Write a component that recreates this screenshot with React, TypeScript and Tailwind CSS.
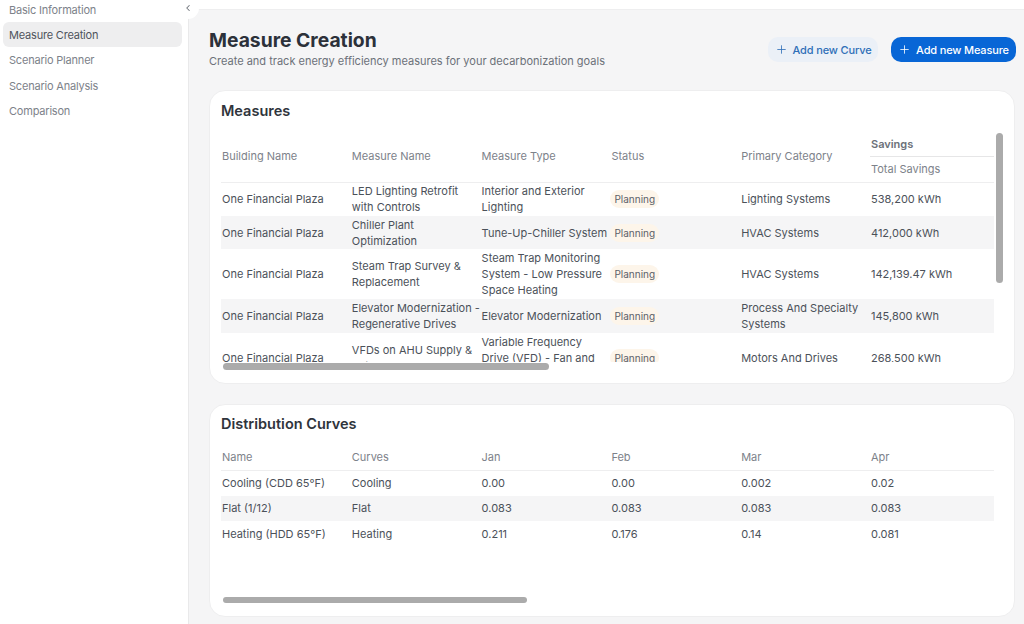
import { ChevronLeft, Plus } from 'lucide-react';

const navItems = ['Basic Information', 'Measure Creation', 'Scenario Planner', 'Scenario Analysis', 'Comparison'];

const measures = [
  { name: ['LED Lighting Retrofit', 'with Controls'], type: ['Interior and Exterior', 'Lighting'], category: ['Lighting Systems'], savings: '538,200 kWh', height: 'h-[34px]' },
  { name: ['Chiller Plant', 'Optimization'], type: ['Tune-Up-Chiller System'], category: ['HVAC Systems'], savings: '412,000 kWh', height: 'h-[33px]' },
  { name: ['Steam Trap Survey &', 'Replacement'], type: ['Steam Trap Monitoring', 'System - Low Pressure', 'Space Heating'], category: ['HVAC Systems'], savings: '142,139.47 kWh', height: 'h-[50px]' },
  { name: ['Elevator Modernization -', 'Regenerative Drives'], type: ['Elevator Modernization'], category: ['Process And Specialty', 'Systems'], savings: '145,800 kWh', height: 'h-[34px]' },
  { name: ['VFDs on AHU Supply &', 'Return Fans'], type: ['Variable Frequency', 'Drive (VFD) - Fan and', 'Pump Applications'], category: ['Motors And Drives'], savings: '268,500 kWh', height: 'h-[50px]' },
];

const curves = [
  ['Cooling (CDD 65°F)', 'Cooling', '0.00', '0.00', '0.002', '0.02'],
  ['Flat (1/12)', 'Flat', '0.083', '0.083', '0.083', '0.083'],
  ['Heating (HDD 65°F)', 'Heating', '0.211', '0.176', '0.14', '0.081'],
];

function Lines({ lines }: { lines: string[] }) {
  return (
    <div className="whitespace-nowrap">
      {lines.map(line => (
        <div key={line}>{line}</div>
      ))}
    </div>
  );
}

function Cols() {
  return (
    <colgroup>
      <col className="w-[129.8px]" />
      <col className="w-[129.8px]" />
      <col className="w-[129.8px]" />
      <col className="w-[129.8px]" />
      <col className="w-[129.8px]" />
      <col className="w-[124px]" />
    </colgroup>
  );
}

export default function App() {
  return (
    <div className="flex h-[624px] w-[1024px] overflow-hidden bg-[#f5f5f6] font-['Inter',sans-serif] text-[11px] leading-4 text-[#4b5159]">
      {/* Sidebar */}
      <aside className="relative w-[189px] shrink-0 border-r border-[#e9e9ea] bg-white px-[3px]">
        <div className="-mt-[3px] flex flex-col gap-[0.4px] tracking-[-0.2px]">
          {navItems.map(item => (
            <div
              key={item}
              className={
                item === 'Measure Creation'
                  ? 'flex h-[25px] w-[179px] items-center rounded-md bg-[#eeeeef] px-[6px] text-[#4f545c]'
                  : 'flex h-[25px] w-[179px] items-center px-[6px] text-[#7d828a]'
              }
            >
              {item}
            </div>
          ))}
        </div>
        <div className="absolute -right-[11px] -top-[3px] flex h-[22px] w-[22px] items-center justify-center rounded-full bg-white">
          <ChevronLeft size={10} strokeWidth={2.5} className="text-[#6f747b]" />
        </div>
      </aside>

      <div className="flex min-w-0 flex-1 flex-col">
        <div className="h-[10px] shrink-0 border-b border-[#eeeeef] bg-white" />

        <main className="flex flex-col pl-[20px] pr-[8px] pt-[18px]">
          {/* Header */}
          <div className="flex items-start justify-between">
            <div>
              <h1 className="text-[19.3px] font-bold leading-[24px] text-[#2c313a]">Measure Creation</h1>
              <p className="mt-px text-[#6c7179]">
                Create and track energy efficiency measures for your decarbonization goals
              </p>
            </div>
            <div className="mt-[9px] flex gap-[13px]">
              <button className="flex h-[25px] w-[110px] items-center justify-center gap-[5px] rounded-[10px] bg-[#ebf0f7] font-medium tracking-[-0.15px] text-[#2f6fb8]">
                <Plus size={13} strokeWidth={1.5} />
                Add new Curve
              </button>
              <button className="flex h-[25px] w-[125px] items-center justify-center gap-[5px] rounded-[10px] bg-[#0866d6] font-medium tracking-[-0.15px] text-white">
                <Plus size={13} strokeWidth={1.5} />
                Add new Measure
              </button>
            </div>
          </div>

          {/* Measures */}
          <section className="relative mt-[21px] h-[294px] w-[806px] overflow-hidden rounded-2xl border border-[#eeeeef] bg-white pl-[11px] pt-[10px]">
            <h2 className="text-[14.5px] font-semibold leading-[20px] text-[#2f343c]">Measures</h2>
            <div className="mt-[11px] h-[230px] w-[773px] overflow-hidden">
              <table className="w-[773px] table-fixed border-collapse">
                <Cols />
                <thead className="text-[#7d828a]">
                  <tr className="h-[24px]">
                    <th rowSpan={2} className="border-b border-[#eeeeef] pb-[2px] pl-px text-left font-normal">Building Name</th>
                    <th rowSpan={2} className="border-b border-[#eeeeef] pb-[2px] pl-px text-left font-normal">Measure Name</th>
                    <th rowSpan={2} className="border-b border-[#eeeeef] pb-[2px] pl-px text-left font-normal">Measure Type</th>
                    <th rowSpan={2} className="border-b border-[#eeeeef] pb-[2px] pl-px text-left font-normal">Status</th>
                    <th rowSpan={2} className="border-b border-[#eeeeef] pb-[2px] pl-px text-left font-normal">Primary Category</th>
                    <th className="border-b border-[#e6e6e7] pl-px text-left font-semibold text-[#6c7179]">Savings</th>
                  </tr>
                  <tr className="h-[26px]">
                    <th className="border-b border-[#eeeeef] pb-px pl-px text-left font-normal">Total Savings</th>
                  </tr>
                </thead>
                <tbody>
                  {measures.map((row, i) => (
                    <tr key={row.savings} className={`${row.height} ${i % 2 === 1 ? 'bg-[#f5f5f6]' : ''}`}>
                      <td className="pl-px">One Financial Plaza</td>
                      <td className="pl-px"><Lines lines={row.name} /></td>
                      <td className="pl-px"><Lines lines={row.type} /></td>
                      <td>
                        <span className="inline-block rounded-full bg-[#fdf5ea] px-[4px] py-px text-[10px] text-[#5c6168]">Planning</span>
                      </td>
                      <td className="pl-px"><Lines lines={row.category} /></td>
                      <td className="pl-px">{row.savings}</td>
                    </tr>
                  ))}
                </tbody>
              </table>
            </div>
            <div className="absolute left-[13px] top-[272px] h-[7px] w-[326px] rounded-full bg-[#ababab]" />
            <div className="absolute left-[786px] top-[42px] h-[150px] w-[7px] rounded-full bg-[#ababab]" />
          </section>

          {/* Distribution Curves */}
          <section className="relative mt-[20px] h-[213px] w-[806px] overflow-hidden rounded-2xl border border-[#eeeeef] bg-white pl-[11px] pt-[9px]">
            <h2 className="text-[14.5px] font-semibold leading-[20px] text-[#2f343c]">Distribution Curves</h2>
            <table className="mt-[10px] w-[773px] table-fixed border-collapse">
              <Cols />
              <thead className="text-[#7d828a]">
                <tr className="h-[26px] border-b border-[#eeeeef]">
                  {['Name', 'Curves', 'Jan', 'Feb', 'Mar', 'Apr'].map(h => (
                    <th key={h} className="pl-px text-left font-normal">{h}</th>
                  ))}
                </tr>
              </thead>
              <tbody>
                {curves.map((row, i) => (
                  <tr key={row[0]} className={`h-[25.5px] ${i === 1 ? 'bg-[#f5f5f6]' : ''}`}>
                    {row.map((cell, j) => (
                      <td key={j} className="pl-px">{cell}</td>
                    ))}
                  </tr>
                ))}
              </tbody>
            </table>
            <div className="absolute left-[13px] top-[192px] h-[6px] w-[304px] rounded-full bg-[#ababab]" />
          </section>
        </main>
      </div>
    </div>
  );
}
